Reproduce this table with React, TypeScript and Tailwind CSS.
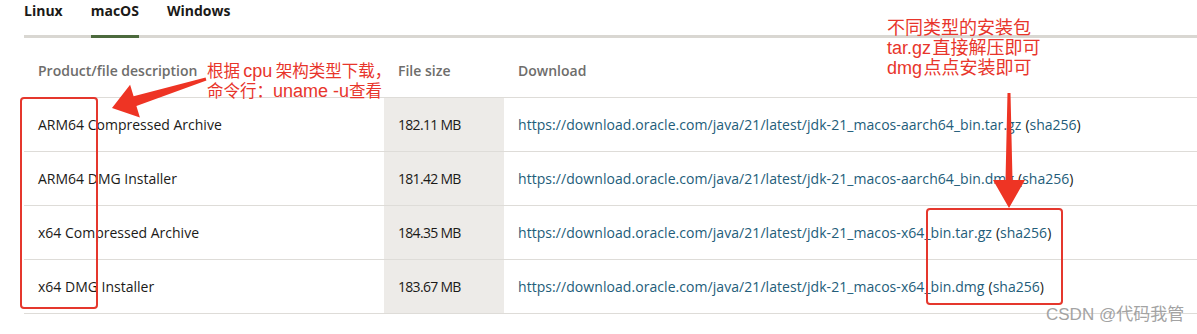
const rows = [
  { name: "ARM64 Compressed Archive", size: "182.11 MB", file: "jdk-21_macos-aarch64_bin.tar.gz" },
  { name: "ARM64 DMG Installer", size: "181.42 MB", file: "jdk-21_macos-aarch64_bin.dmg" },
  { name: "x64 Compressed Archive", size: "184.35 MB", file: "jdk-21_macos-x64_bin.tar.gz" },
  { name: "x64 DMG Installer", size: "183.67 MB", file: "jdk-21_macos-x64_bin.dmg" },
];

const tabs = ["Linux", "macOS", "Windows"];

export default function App() {
  return (
    <div className="relative h-[334px] w-[1197px] overflow-hidden bg-white font-['Open_Sans',sans-serif] text-[#1b1a18]">
      {/* Tabs */}
      <div className="ml-[24px] flex gap-[28px] border-b-[3px] border-[#d9d7d2]">
        {tabs.map((t) => (
          <div
            key={t}
            className={
              "-mb-[3px] border-b-[3px] pt-[2px] pb-[16px] text-[14px] leading-[17px] font-bold " +
              (t === "macOS" ? "border-[#4c6a3d]" : "border-transparent")
            }
          >
            {t}
          </div>
        ))}
      </div>

      {/* Table */}
      <div className="ml-[24px]">
        <div className="flex h-[60px] border-b border-[#dedcd8] pt-[23px] text-[14px] leading-[20px] font-semibold text-[#6e6d6b]">
          <div className="w-[360px] pl-[14px]">Product/file description</div>
          <div className="w-[120px] pl-[14px]">File size</div>
          <div className="pl-[14px]">Download</div>
        </div>
        {rows.map((r) => (
          <div key={r.name} className="flex h-[54px] border-b border-[#dedcd8] text-[14px] leading-[20px]">
            <div className="flex w-[360px] items-center pl-[14px]">{r.name}</div>
            <div className="flex w-[120px] items-center bg-[#edebe8] pl-[14px] tracking-[-0.7px]">{r.size}</div>
            <div className="flex items-center pl-[14px]">
              <span className="tracking-[0.06px] text-[#235d7a]">https://download.oracle.com/java/21/latest/{r.file}</span>
              <span className="ml-[4px]">
                (<span className="text-[#235d7a]">sha256</span>)
              </span>
            </div>
          </div>
        ))}
      </div>

      {/* Annotations */}
      <div className="pointer-events-none absolute top-[97px] left-[20px] h-[212px] w-[78px] rounded-[4px] border-2 border-[#e5372d]" />
      <div className="pointer-events-none absolute top-[208px] left-[926px] h-[97px] w-[137px] rounded-[4px] border-2 border-[#e5372d]" />

      <svg className="pointer-events-none absolute inset-0" width="1197" height="334" viewBox="0 0 1197 334">
        <polygon
          fill="#ee3424"
          points="205.6,77.6 133.6,96.3 130.1,84.8 112,108 139.9,117.4 136.4,105.9 206.4,80.4"
        />
        <polygon
          fill="#ee3424"
          points="1007.5,93 1010.5,93 1012.5,180 1025,180 1009,208 993,180 1005.5,180"
        />
      </svg>

      <div className="absolute top-[61px] left-[207px] text-[16.5px] leading-[20px] text-[#e8352b] font-['Liberation_Sans','Noto_Sans_CJK_SC',sans-serif]">
        <div>
          根据{"\u2009"}
          <span className="text-[18px]">cpu</span>
          {"\u2009"}架构类型下载，
        </div>
        <div>
          命令行：<span className="text-[18px]">uname -u</span>查看
        </div>
      </div>

      <div className="absolute top-[18px] left-[887px] text-[18px] leading-[20px] text-[#e8352b] font-['Liberation_Sans','Noto_Sans_CJK_SC',sans-serif]">
        <div>不同类型的安装包</div>
        <div>tar.gz{"\u200a"}直接解压即可</div>
        <div>dmg{"\u200a"}点点安装即可</div>
      </div>

      <div className="absolute top-[304px] left-[1046px] text-[17px] leading-[22px] text-[#a3a3a3] font-['Liberation_Sans','Noto_Sans_CJK_SC',sans-serif]">
        CSDN @代码我管
      </div>
    </div>
  );
}
